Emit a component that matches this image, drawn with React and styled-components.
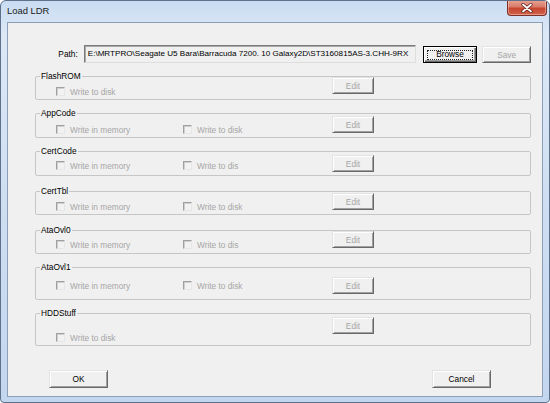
import React from 'react';
import styled, { createGlobalStyle } from 'styled-components';

const GlobalStyle = createGlobalStyle`
  html, body {
    margin: 0;
    padding: 0;
    background: #ffffff;
  }
  body {
    font-family: 'Liberation Sans', Arial, sans-serif;
  }
`;

const Window = styled.div`
  width: 550px;
  height: 403px;
  box-sizing: border-box;
  border: 1px solid #5d718a;
  border-radius: 6px 6px 4px 4px;
  background: linear-gradient(180deg, #c9dcf1 0%, #dce8f6 8%, #d0e0f3 45%, #c2d6ee 100%);
  display: flex;
  flex-direction: column;
  overflow: hidden;
`;

const TitleBar = styled.div`
  height: 21px;
  flex: none;
  display: flex;
  align-items: flex-start;
  justify-content: space-between;
  padding-left: 6px;
`;

const Title = styled.span`
  font-size: 9.4px;
  line-height: 20px;
  color: #1b1b1b;
`;

const CloseButton = styled.div`
  width: 40px;
  height: 16px;
  margin: -1px 2px 0 0;
  box-sizing: border-box;
  border: 1px solid #7e3026;
  border-top: none;
  border-radius: 0 0 4px 4px;
  background: linear-gradient(180deg, #e8a494 0%, #d87c6a 45%, #c6452f 55%, #d2644c 100%);
  box-shadow: inset 0 0 0 1px rgba(255, 220, 210, 0.45);
  display: flex;
  align-items: center;
  justify-content: center;
`;

const Client = styled.div`
  flex: 1;
  margin: 0 6px 5px;
  background: #f0f0f0;
  border: 1px solid #8c9fb6;
  display: flex;
  flex-direction: column;
  padding: 22px 11px 0 27px;
  font-size: 8.3px;
`;

const PathRow = styled.div`
  display: flex;
  align-items: flex-start;
`;

const PathLabel = styled.span`
  width: 43px;
  text-align: right;
  line-height: 18px;
  color: #000;
`;

const PathField = styled.div`
  width: 334px;
  height: 18px;
  margin-left: 6px;
  box-sizing: border-box;
  border: 1px solid;
  border-color: #7a7a7a #dedede #dedede #7a7a7a;
  box-shadow: inset 1px 1px 0 #a9a9a9;
  padding-left: 3px;
  font-size: 8.1px;
  line-height: 16px;
  color: #000;
  white-space: nowrap;
  overflow: hidden;
`;

const Button = styled.button`
  width: ${p => p.$w}px;
  height: ${p => p.$h || 18}px;
  margin: ${p => p.$m || '0'};
  padding: 0;
  box-sizing: border-box;
  background: #f0f0f0;
  font-family: inherit;
  font-size: 8.3px;
  color: ${p => (p.disabled ? '#a6a6a6' : '#000')};
  border: 1px solid;
  border-color: #e3e3e3 #696969 #696969 #e3e3e3;
  box-shadow: inset 1px 1px 0 #ffffff, inset -1px -1px 0 #a0a0a0;
  display: flex;
  align-items: center;
  justify-content: center;
`;

const DefaultButton = styled(Button)`
  border-color: #000;
  box-shadow: inset 1px 1px 0 #ffffff, inset -1px -1px 0 #696969, inset -2px -2px 0 #a0a0a0;
`;

const Focus = styled.span`
  display: flex;
  align-items: center;
  justify-content: center;
  width: calc(100% - 6px);
  height: calc(100% - 5px);
  border: 1px dotted #222;
  box-sizing: border-box;
  line-height: 1;
`;

const Groups = styled.div`
  display: flex;
  flex-direction: column;
`;

const Group = styled.div`
  margin-top: ${p => p.$gap}px;
  height: ${p => p.$h}px;
  box-sizing: border-box;
  border: 1px solid #c6c6c6;
  border-radius: 2px;
`;

const Caption = styled.div`
  width: fit-content;
  margin: -6px 0 -5px 4px;
  padding: 0 1px;
  background: #f0f0f0;
  line-height: 11px;
  color: #000;
  position: relative;
`;

const Body = styled.div`
  display: grid;
  grid-template-columns: 127px 149px 42px;
  align-items: start;
  padding-left: 20px;
`;

const Check = styled.label`
  grid-column: ${p => p.$col};
  grid-row: 1;
  margin-top: ${p => p.$top}px;
  display: flex;
  align-items: center;
  gap: 5px;
  height: 9px;
  color: #a6a6a6;
  white-space: nowrap;
`;

const CheckBox = styled.span`
  width: 9px;
  height: 9px;
  flex: none;
  box-sizing: border-box;
  border: 1px solid;
  border-color: #a0a0a0 #e6e6e6 #e6e6e6 #a0a0a0;
  box-shadow: inset 1px 1px 0 #cfcfcf;
  background: #f2f2f2;
`;

const EditSlot = styled.div`
  grid-column: 3;
  grid-row: 1;
  margin-top: ${p => p.$top}px;
`;

const Footer = styled.div`
  display: flex;
  justify-content: space-between;
  margin-top: 24px;
  padding: 0 40px 0 14px;
`;

const groups = [
  { name: 'FlashROM', gap: 13, h: 24, edit: 0, check: 10, items: ['Write to disk'] },
  { name: 'AppCode', gap: 13, h: 25, edit: 2, check: 11, items: ['Write in memory', 'Write to disk'] },
  { name: 'CertCode', gap: 13, h: 25, edit: 3, check: 9, items: ['Write in memory', 'Write to dis'] },
  { name: 'CertTbl', gap: 15, h: 24, edit: 1, check: 10, items: ['Write in memory', 'Write to disk'] },
  { name: 'AtaOvl0', gap: 15, h: 24, edit: 0, check: 9, items: ['Write in memory', 'Write to dis'] },
  { name: 'AtaOvl1', gap: 13, h: 33, edit: 9, check: 13, items: ['Write in memory', 'Write to disk'] },
  { name: 'HDDStuff', gap: 13, h: 33, edit: 3, check: 19, items: ['Write to disk'] },
];

function CloseGlyph() {
  return (
    <svg width="12" height="10" viewBox="0 0 12 10">
      <path d="M2 1.5 L10 8.5 M10 1.5 L2 8.5" stroke="#5a1a12" strokeWidth="3.2" strokeLinecap="round" />
      <path d="M2 1.5 L10 8.5 M10 1.5 L2 8.5" stroke="#ffffff" strokeWidth="1.8" strokeLinecap="round" />
    </svg>
  );
}

export default function App() {
  return (
    <>
      <GlobalStyle />
      <Window>
        <TitleBar>
          <Title>Load LDR</Title>
          <CloseButton>
            <CloseGlyph />
          </CloseButton>
        </TitleBar>
        <Client>
          <PathRow>
            <PathLabel>Path:</PathLabel>
            <PathField>E:\MRTPRO\Seagate U5 Bara\Barracuda 7200. 10 Galaxy2D\ST3160815AS-3.CHH-9RX</PathField>
            <DefaultButton $w={55} $h={17} $m="1px 0 0 7px">
              <Focus>Browse</Focus>
            </DefaultButton>
            <Button $w={49} $h={17} $m="1px 0 0 5px" disabled>
              Save
            </Button>
          </PathRow>
          <Groups>
            {groups.map(g => (
              <Group key={g.name} $gap={g.gap} $h={g.h}>
                <Caption>{g.name}</Caption>
                <Body>
                  {g.items.map((item, i) => (
                    <Check key={item} $col={i + 1} $top={g.check}>
                      <CheckBox />
                      {item}
                    </Check>
                  ))}
                  <EditSlot $top={g.edit}>
                    <Button $w={42} $h={17} disabled>
                      Edit
                    </Button>
                  </EditSlot>
                </Body>
              </Group>
            ))}
          </Groups>
          <Footer>
            <Button $w={59}>OK</Button>
            <Button $w={59}>Cancel</Button>
          </Footer>
        </Client>
      </Window>
    </>
  );
}
